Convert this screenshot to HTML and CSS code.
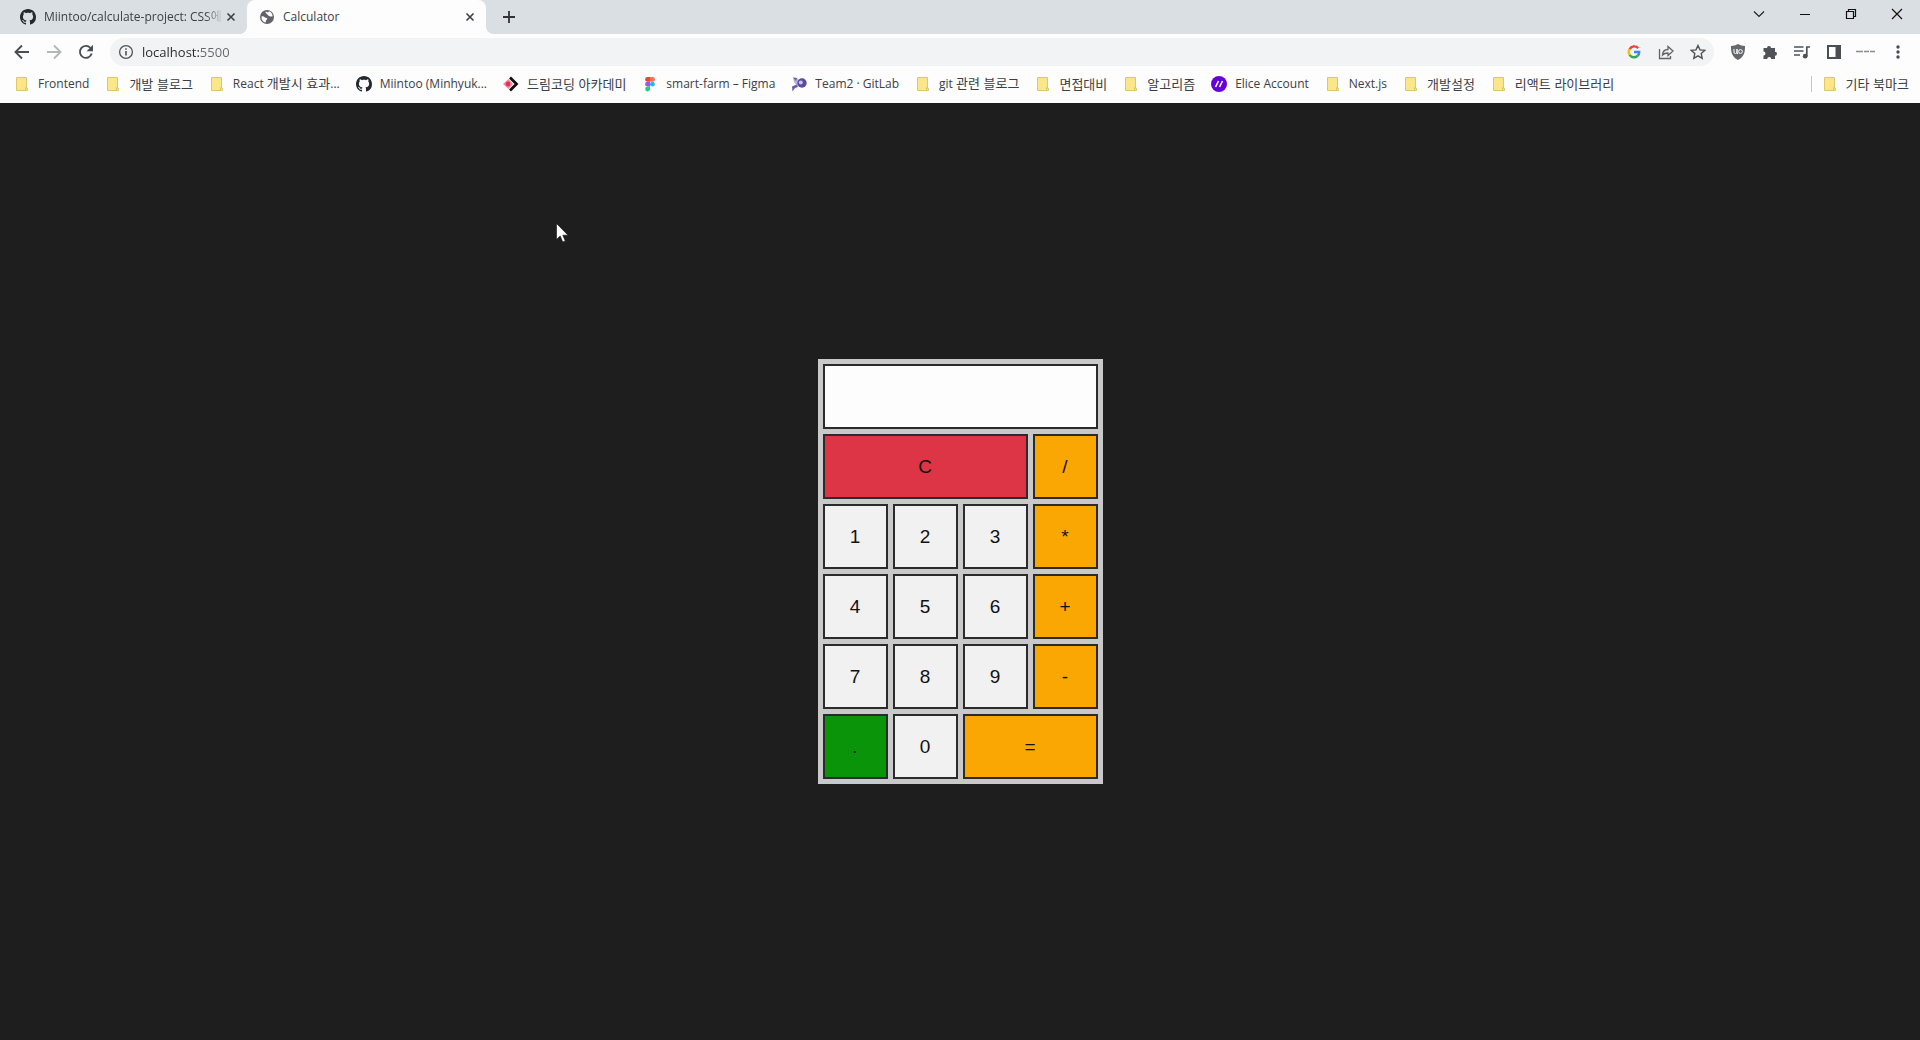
FILE: index.html
```html
<!DOCTYPE html>
<html lang="ko">
<head>
<meta charset="utf-8">
<title>Calculator</title>
<link rel="stylesheet" href="styles.css">
</head>
<body>
<svg class="defs" aria-hidden="true">
  <symbol id="github" viewBox="0 0 16 16"><path d="M8 0C3.58 0 0 3.58 0 8c0 3.54 2.29 6.53 5.47 7.59.4.07.55-.17.55-.38 0-.19-.01-.82-.01-1.49-2.01.37-2.53-.49-2.69-.94-.09-.23-.48-.94-.82-1.13-.28-.15-.68-.52-.01-.53.63-.01 1.08.58 1.23.82.72 1.21 1.87.87 2.33.66.07-.52.28-.87.51-1.07-1.78-.2-3.64-.89-3.64-3.95 0-.87.31-1.59.82-2.15-.08-.2-.36-1.02.08-2.12 0 0 .67-.21 2.2.82.64-.18 1.32-.27 2-.27s1.36.09 2 .27c1.53-1.04 2.2-.82 2.2-.82.44 1.1.16 1.92.08 2.12.51.56.82 1.27.82 2.15 0 3.07-1.87 3.75-3.65 3.95.29.25.54.73.54 1.48 0 1.07-.01 1.93-.01 2.2 0 .21.15.46.55.38A8 8 0 0 0 16 8c0-4.42-3.58-8-8-8z" fill="#24292f"/></symbol>
  <symbol id="folder" viewBox="0 0 16 16"><path d="M2.500 1.500h10v11h1v2h-11z" fill="#fbe68a" stroke="#dcc86a"/><path d="M11.500 14v-2.500h1.500" fill="none" stroke="#dcc86a"/></symbol>
  <symbol id="close" viewBox="0 0 16 16"><path d="M4.500 4.500l7 7M11.500 4.500l-7 7" fill="none" stroke="#3c4043" stroke-width="1.600"/></symbol>
</svg>

<header class="browser">
  <div class="tabstrip">
    <div class="tab">
      <svg class="icon"><use href="#github"/></svg>
      <span class="tab-title fade">Miintoo/calculate-project: CSS에</span>
      <button class="tab-close" aria-label="탭 닫기"><svg class="icon"><use href="#close"/></svg></button>
    </div>
    <div class="tab active">
      <svg class="icon" viewBox="0 0 16 16"><circle cx="8" cy="8" r="7" fill="#5f6368"/><path d="M7 2.600c-1 .8-.2 2 .8 2.200.8.200.4 1.400 1.400 1.600 1.200.2 1 1 2.200 1 1 0 1.600.6 2.200-.4-.2-2.200-1.500-4-3.400-4.800L9 3.600zM2.500 7.400C4 7.200 5 7.600 6 8.400c1 .6 2.300.2 2.300 1.400 0 1-1.300 1-1.400 2.100l-.2 1.600C4 13.100 2.300 10.600 2.500 7.400z" fill="#fdfdfe"/></svg>
      <span class="tab-title">Calculator</span>
      <button class="tab-close" aria-label="탭 닫기"><svg class="icon"><use href="#close"/></svg></button>
    </div>
    <button class="new-tab" aria-label="새 탭"><svg class="icon" viewBox="0 0 16 16"><path d="M8 2v12M2 8h12" stroke="#303438" stroke-width="1.800"/></svg></button>
    <div class="window-controls">
      <button aria-label="탭 검색"><svg class="icon" viewBox="0 0 16 16"><path d="M3 5.500l5 5 5-5" fill="none" stroke="#222" stroke-width="1.200"/></svg></button>
      <button aria-label="최소화"><svg class="icon" viewBox="0 0 16 16"><path d="M3 8.500h10" stroke="#111"/></svg></button>
      <button aria-label="이전 크기로"><svg class="icon" viewBox="0 0 16 16"><path d="M3.500 5.500h7v7h-7zM5.500 5.500v-2h7v7h-2" fill="none" stroke="#111" stroke-width="1.200"/></svg></button>
      <button aria-label="닫기"><svg class="icon" viewBox="0 0 16 16"><path d="M3 3l10 10M13 3L3 13" stroke="#111" stroke-width="1.200"/></svg></button>
    </div>
  </div>

  <div class="toolbar">
    <button aria-label="뒤로"><svg class="icon" viewBox="0 0 16 16"><path d="M15 8H2M8 1.500L1.500 8 8 14.500" fill="none" stroke="#4a4d51" stroke-width="1.900"/></svg></button>
    <button aria-label="앞으로"><svg class="icon" viewBox="0 0 16 16"><path d="M1 8h13M8 1.500L14.500 8 8 14.500" fill="none" stroke="#b4b6b9" stroke-width="1.900"/></svg></button>
    <button aria-label="새로고침"><svg class="icon" viewBox="0 0 16 16"><path d="M13.700 9.500A6 6 0 1 1 12.500 4" fill="none" stroke="#4a4d51" stroke-width="1.900"/><path d="M15 .8v6.400H8.600z" fill="#4a4d51"/></svg></button>
    <div class="omnibox">
      <svg class="icon" viewBox="0 0 16 16"><circle cx="8" cy="8" r="6.400" fill="none" stroke="#4f5357" stroke-width="1.300"/><path d="M8 7v4.500M8 4.200v1.600" stroke="#4f5357" stroke-width="1.600"/></svg>
      <input class="address" type="text" value="localhost:5500" aria-label="주소창">
      <button aria-label="Google"><svg class="icon" viewBox="0 0 16 16"><g fill="none" stroke-width="2.400"><path d="M12.200 4.200A5.200 5.200 0 0 0 3.600 5.200" stroke="#ea4335"/><path d="M3.600 5.200a5.200 5.200 0 0 0 0 5.600" stroke="#fbbc05"/><path d="M3.600 10.800a5.200 5.200 0 0 0 7.800 1.200" stroke="#34a853"/><path d="M11.400 12A5 5 0 0 0 13.200 8H8" stroke="#4285f4"/></g></svg></button>
      <button aria-label="공유"><svg class="icon" viewBox="0 0 16 16"><path d="M1.500 5v9.500h11V12M4.500 11c.2-4 2.500-5.500 5.500-5.500V2.500l5 4.500-5 4.500V9C7.500 9 5.800 9.500 4.500 11z" fill="none" stroke="#5f6368" stroke-width="1.300"/></svg></button>
      <button aria-label="북마크"><svg class="icon" viewBox="0 0 16 16"><path d="M8 1.500l2 4.400 4.700.5-3.500 3.200 1 4.700L8 11.900l-4.200 2.400 1-4.700-3.500-3.200 4.700-.5z" fill="none" stroke="#4f5357" stroke-width="1.400"/></svg></button>
    </div>
    <button aria-label="uBlock Origin"><svg class="icon" viewBox="0 0 16 16"><path d="M8 0c2 1.300 4.500 2 7 2 0 6-.5 10.500-7 14C1.500 12.500 1 8 1 2c2.500 0 5-.7 7-2z" fill="#66686c"/><path d="M4 5v3q0 1.500 1.500 1.500T7 8V5v4.500h1.200" fill="none" stroke="#fff"/><circle cx="10.500" cy="7.500" r="1.900" fill="none" stroke="#fff"/></svg></button>
    <button aria-label="확장 프로그램"><svg class="icon" viewBox="0 0 16 16"><path d="M1.500 4H5a2 2 0 1 1 4 0h4v3.700a2 2 0 1 1 0 4V15H9.200a2 2 0 0 0-4 0H1.500v-3.500a2 2 0 0 0 0-4z" fill="#4f5357"/></svg></button>
    <button aria-label="미디어"><svg class="icon" viewBox="0 0 16 16"><path d="M0 3h9.500M0 7h9.500M0 11h6M16 3h-3.200v9" fill="none" stroke="#4f5357" stroke-width="1.700"/><circle cx="11.200" cy="12.200" r="2.400" fill="#4f5357"/></svg></button>
    <button aria-label="사이드 패널"><svg class="icon" viewBox="0 0 16 16"><path d="M2 2h12v12H2z" fill="none" stroke="#4a4d51" stroke-width="2"/><path d="M9.500 2H14v12H9.500z" fill="#4a4d51"/></svg></button>
    <button aria-label="프로필"><svg class="icon spill" viewBox="0 0 16 16"><path d="M-2 7.500h19" stroke="#8b8d90" stroke-width="1.400" stroke-dasharray="7 1 5 1"/></svg></button>
    <button aria-label="메뉴"><svg class="icon" viewBox="0 0 16 16"><g fill="#4a4d51"><circle cx="8" cy="3" r="1.700"/><circle cx="8" cy="8" r="1.700"/><circle cx="8" cy="13" r="1.700"/></g></svg></button>
  </div>

  <nav class="bookmarks">
    <a href="#"><svg class="icon"><use href="#folder"/></svg>Frontend</a>
    <a href="#" class="ko"><svg class="icon"><use href="#folder"/></svg>개발 블로그</a>
    <a href="#"><svg class="icon"><use href="#folder"/></svg><span>React <span class="ko">개발시 효과</span>...</span></a>
    <a href="#"><svg class="icon"><use href="#github"/></svg>Miintoo (Minhyuk...</a>
    <a href="#" class="ko"><svg class="icon" viewBox="0 0 16 16"><path d="M5.500 3L10 8l-4.500 5L0 8z" fill="#f58aa0"/><circle cx="5" cy="8" r="2.400" fill="#e0345a"/><path d="M7 1.500L13.500 8 7 14.500" fill="none" stroke="#111" stroke-width="2.800"/></svg>드림코딩 아카데미</a>
    <a href="#"><svg class="icon" viewBox="0 0 16 16"><path d="M8 1H5.500a2.400 2.400 0 0 0 0 4.800H8z" fill="#e8492b"/><path d="M8 1h2.500a2.400 2.400 0 0 1 0 4.800H8z" fill="#f5705a"/><path d="M8 5.800H5.500a2.400 2.400 0 0 0 0 4.800H8z" fill="#9a55f0"/><circle cx="10.400" cy="8.200" r="2.400" fill="#28b6f0"/><path d="M8 10.600H5.500A2.400 2.400 0 1 0 8 13z" fill="#1fce80"/></svg>smart-farm – Figma</a>
    <a href="#"><svg class="icon" viewBox="0 0 16 16"><path d="M2 1.500l4 .5 3 3-2 6-4-5z" fill="#b9b1dc"/><path d="M2 1.500l4 .5-1 3z" fill="#6d5cae"/><circle cx="11" cy="7" r="4.700" fill="#5a4a9e"/><circle cx="9.800" cy="6.600" r="2" fill="#c9c2e6"/><path d="M1 10.500l4.500-2 1.500 2.500-3 1-2.500 3.500z" fill="#6d5cae"/></svg>Team2 · GitLab</a>
    <a href="#"><svg class="icon"><use href="#folder"/></svg><span>git <span class="ko">관련 블로그</span></span></a>
    <a href="#" class="ko"><svg class="icon"><use href="#folder"/></svg>면접대비</a>
    <a href="#" class="ko"><svg class="icon"><use href="#folder"/></svg>알고리즘</a>
    <a href="#"><svg class="icon" viewBox="0 0 16 16"><circle cx="8" cy="8" r="8" fill="#6500d8"/><path d="M4.500 11L7.500 5M8.500 11l3-6" stroke="#fff" stroke-width="1.600"/></svg>Elice Account</a>
    <a href="#"><svg class="icon"><use href="#folder"/></svg>Next.js</a>
    <a href="#" class="ko"><svg class="icon"><use href="#folder"/></svg>개발설정</a>
    <a href="#" class="ko"><svg class="icon"><use href="#folder"/></svg>리액트 라이브러리</a>
    <a href="#" class="ko other"><svg class="icon"><use href="#folder"/></svg>기타 북마크</a>
  </nav>
</header>

<main class="page">
  <form class="calculator">
    <input class="display" type="text" aria-label="계산 결과" readonly>
    <button type="button" class="clear">C</button>
    <button type="button" class="operator">/</button>
    <button type="button">1</button>
    <button type="button">2</button>
    <button type="button">3</button>
    <button type="button" class="operator">*</button>
    <button type="button">4</button>
    <button type="button">5</button>
    <button type="button">6</button>
    <button type="button" class="operator">+</button>
    <button type="button">7</button>
    <button type="button">8</button>
    <button type="button">9</button>
    <button type="button" class="operator">-</button>
    <button type="button" class="dot">.</button>
    <button type="button">0</button>
    <button type="button" class="operator equals">=</button>
  </form>
  <svg class="cursor" viewBox="0 0 12 20" aria-hidden="true"><path d="M.5.5v16l3.700-3.500 2.500 6 2.600-1.100-2.500-5.700H12z" fill="#fff" stroke="#111" stroke-width=".6"/></svg>
</main>
</body>
</html>
```
FILE: styles.css
```css
* { box-sizing: border-box; }

body {
  margin: 0;
  min-height: 100vh;
  display: flex;
  flex-direction: column;
  background: #1e1e1e;
  font: 12px/16px "Open Sans", "Noto Sans CJK KR", sans-serif;
  color: #3c4043;
}

button {
  margin: 0;
  padding: 0;
  border: 0;
  background: none;
  color: inherit;
}

.defs { position: absolute; width: 0; height: 0; }
.icon { display: block; flex: none; width: 16px; height: 16px; }
.icon.spill { overflow: visible; }

.browser { background: #fdfdfe; }

.tabstrip {
  display: flex;
  height: 34px;
  background: #d9dfe2;
}

.tab {
  display: flex;
  align-items: center;
  gap: 8px;
  width: 239px;
  padding: 0 8px 0 12px;
}
.tab:first-child { margin-left: 8px; }
.tab.active {
  position: relative;
  background: #fdfdfe;
  border-radius: 8px 8px 0 0;
}
.tab.active::before,
.tab.active::after {
  content: "";
  position: absolute;
  bottom: 0;
  width: 8px;
  height: 8px;
}
.tab.active::before {
  right: 100%;
  background: radial-gradient(circle at 0 0, transparent 8px, #fdfdfe 8px);
}
.tab.active::after {
  left: 100%;
  background: radial-gradient(circle at 100% 0, transparent 8px, #fdfdfe 8px);
}
.tab-title { flex: 1; overflow: hidden; white-space: nowrap; }
.tab-close { margin-left: -8px; }
.fade { mask-image: linear-gradient(90deg, #000 90%, transparent); }
.new-tab { margin-left: 15px; }

.window-controls { display: flex; margin-left: auto; padding-bottom: 6px; }
.window-controls button { display: grid; place-items: center; width: 46px; }

.toolbar {
  display: flex;
  align-items: center;
  gap: 16px;
  height: 36px;
  padding: 0 14px;
}
.omnibox {
  flex: 1;
  display: flex;
  align-items: center;
  gap: 16px;
  height: 28px;
  padding: 0 8px;
  border-radius: 14px;
  background: #f1f3f4;
}
/* The host is darker than the port that follows it. */
.address {
  flex: 1;
  min-width: 0;
  margin-left: -8px;
  padding: 0;
  border: 0;
  background: linear-gradient(90deg, #26282b 58px, #63676b 58px) text;
  font: 13px/20px "Open Sans", sans-serif;
  color: transparent;
}

.bookmarks {
  display: flex;
  align-items: center;
  gap: 16px;
  height: 33px;
  padding: 0 11px 6px 14px;
}
.bookmarks a {
  display: flex;
  align-items: center;
  gap: 8px;
  color: inherit;
  text-decoration: none;
  white-space: nowrap;
}
.ko { font-family: "Noto Sans CJK KR", sans-serif; font-size: 13px; }
.bookmarks .other {
  margin-left: auto;
  padding-left: 10px;
  border-left: 1px solid #c4c6c8;
}

.page {
  position: relative;
  flex: 1;
  display: grid;
  place-items: center;
}

.calculator {
  display: grid;
  grid-template-columns: repeat(4, 65px);
  grid-auto-rows: 65px;
  gap: 5px;
  padding: 5px;
  background: #c9c9c9;
}
.calculator button,
.display {
  width: 100%;
  border: 2px solid #2b2b2b;
  background: #f1f1f1;
  color: #111;
  font: 19px "Liberation Sans", Arial, sans-serif;
}
.calculator .display { grid-column: span 4; background: #fdfdfe; }
.calculator .clear { grid-column: span 3; background: #de3546; }
.calculator .operator { background: #faa704; }
.calculator .dot { background: #0a940a; }
.calculator .equals { grid-column: span 2; }

.cursor {
  position: absolute;
  left: 556px;
  top: 120px;
  width: 12px;
  height: 20px;
}
```
